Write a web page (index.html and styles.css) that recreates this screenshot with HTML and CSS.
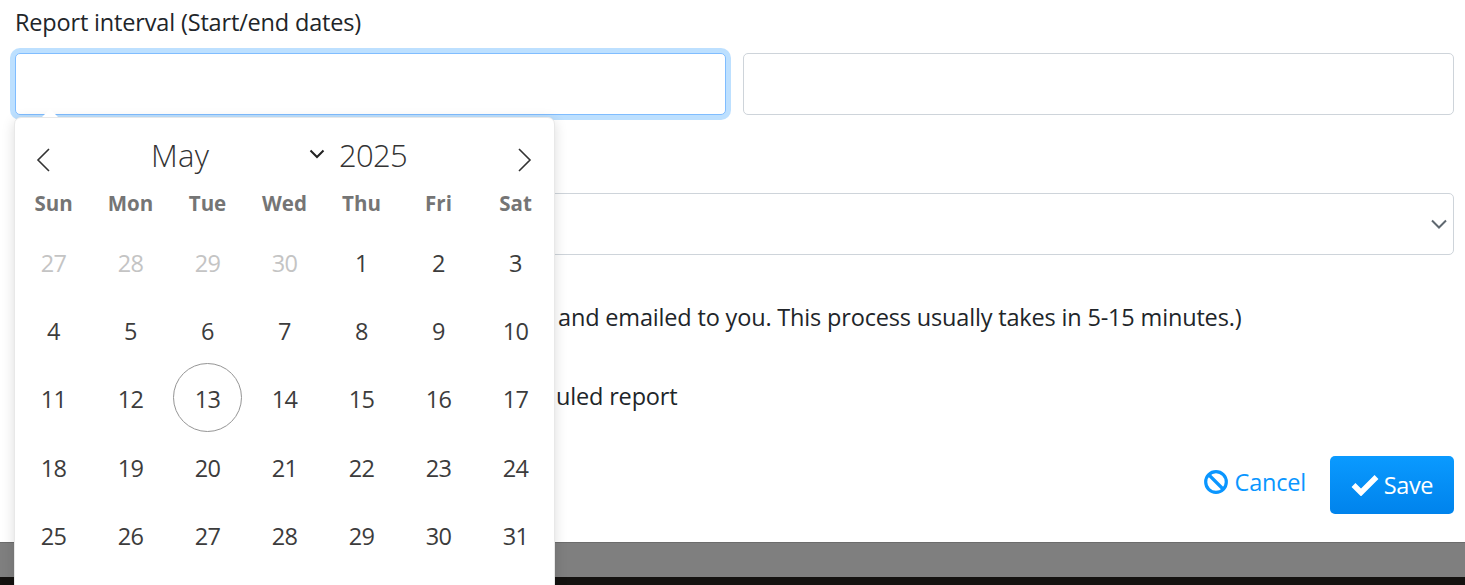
FILE: index.html
```html
<!DOCTYPE html>
<html lang="en">
<head>
<meta charset="utf-8">
<title>Report</title>
<link rel="stylesheet" href="styles.css">
</head>
<body>
<main class="form">
  <div class="label">Report interval (Start/end dates)</div>
  <div class="dates">
    <input class="field focused" type="text" aria-label="Start date">
    <input class="field" type="text" aria-label="End date">
  </div>
  <div class="select">
    <svg class="select-caret" width="16" height="12" viewBox="0 0 16 12"><path d="M1 2.5l7 7 7-7" fill="none" stroke="#5f6870" stroke-width="2"/></svg>
  </div>
  <p class="note">and emailed to you. This process usually takes in 5-15 minutes.)</p>
  <p class="check">uled report</p>
  <div class="actions">
    <a class="cancel">
      <svg width="24" height="24" viewBox="0 0 24 24"><circle cx="12" cy="12" r="10.300" fill="none" stroke="#0a96ff" stroke-width="3.200"/><path d="M5 5l14 14" stroke="#0a96ff" stroke-width="3.200"/></svg>
      <span class="cancel-text">Cancel</span>
    </a>
    <button class="save">
      <svg width="28" height="22" viewBox="0 0 28 22"><path d="M2.500 11l7.500 7.500L25.500 3" fill="none" stroke="#fff" stroke-width="5.500"/></svg>
      Save
    </button>
  </div>
</main>
<div class="overlay"></div>
<div class="black"></div>
<section class="calendar">
  <div class="cal-head">
    <svg class="nav" width="18" height="26" viewBox="0 0 18 26"><path d="M14 2L3 13l11 11" fill="none" stroke="#333" stroke-width="1.600"/></svg>
    <span class="month">May</span>
    <svg class="month-caret" width="16" height="10" viewBox="0 0 16 10"><path d="M1.500 1.500L8 8l6.500-6.500" fill="none" stroke="#222" stroke-width="2"/></svg>
    <span class="year">2025</span>
    <svg class="nav" width="18" height="26" viewBox="0 0 18 26"><path d="M4 2l11 11L4 24" fill="none" stroke="#333" stroke-width="1.600"/></svg>
  </div>
  <div class="weekdays"><span>Sun</span><span>Mon</span><span>Tue</span><span>Wed</span><span>Thu</span><span>Fri</span><span>Sat</span></div>
  <div class="days">
    <span class="prev">27</span><span class="prev">28</span><span class="prev">29</span><span class="prev">30</span><span>1</span><span>2</span><span>3</span>
    <span>4</span><span>5</span><span>6</span><span>7</span><span>8</span><span>9</span><span>10</span>
    <span>11</span><span>12</span><span class="today">13</span><span>14</span><span>15</span><span>16</span><span>17</span>
    <span>18</span><span>19</span><span>20</span><span>21</span><span>22</span><span>23</span><span>24</span>
    <span>25</span><span>26</span><span>27</span><span>28</span><span>29</span><span>30</span><span>31</span>
  </div>
</section>
</body>
</html>
```
FILE: styles.css
```css
html, body { margin: 0; height: 585px; overflow: hidden; background: #fff; }
body { font-family: "Open Sans", "Noto Sans", sans-serif; color: #212529; }
.form { height: 542px; box-sizing: border-box; padding: 0 11px 0 15px; display: flex; flex-direction: column; font-size: 23.500px; letter-spacing: -0.17px; }
.label { height: 53px; line-height: 44px; }
.dates { display: flex; gap: 17px; }
.field { flex: 1; min-width: 0; height: 62px; box-sizing: border-box; border: 1px solid #ced4da; border-radius: 5px; background: #fff; padding: 0; outline: none; }
.field.focused { border-color: #80bdff; box-shadow: 0 0 0 5px #bde0ff; }
.select { margin-top: 78px; height: 62px; box-sizing: border-box; border: 1px solid #ced4da; border-radius: 5px; display: flex; align-items: center; justify-content: flex-end; padding-right: 6px; }
.note { margin: 0; padding: 46px 0 0 543px; line-height: 32px; }
.check { margin: 0; padding: 47px 0 0 541px; line-height: 32px; }
.actions { margin-top: 44px; display: flex; justify-content: flex-end; align-items: center; }
.cancel { display: flex; align-items: center; gap: 7px; color: #0a96ff; margin-right: 24px; margin-top: -7px; letter-spacing: -0.2px; }
.save { width: 124px; height: 58px; border: 0; border-radius: 5px; background: linear-gradient(#0a9aff, #0083ec); color: #fff; font: inherit; letter-spacing: -0.4px; display: flex; align-items: center; justify-content: center; gap: 5px; padding: 0; }
.overlay { height: 35px; background: #7f7f7f; border-top: 1px solid #6c6c6c; box-sizing: border-box; }
.black { height: 8px; background: #141210; }
.calendar { position: absolute; left: 14px; top: 117px; width: 539px; height: 490px; background: #fff; border: 1px solid #e8e8e8; border-radius: 7px; box-shadow: 0 3px 13px rgba(0,0,0,.14); }
.calendar::before { content: ""; position: absolute; left: 27px; top: -9px; width: 0; height: 0; border: 8px solid transparent; border-top: 0; border-bottom-color: #fff; }
.cal-head { height: 63px; display: flex; align-items: center; font-weight: 300; font-size: 31px; color: #333; padding: 10px 21px 0 20px; box-sizing: border-box; }
.nav { margin-top: 10px; }
.month { margin-left: 98px; width: 158px; letter-spacing: 0.3px; }
.month-caret { margin-right: 14px; margin-top: -1px; }
.year { flex: 1; letter-spacing: -0.7px; }
.weekdays { display: grid; grid-template-columns: repeat(7, 77px); height: 44px; text-align: center; font-size: 20.500px; font-weight: 700; color: #757575; letter-spacing: 0; line-height: 44px; }
.days { display: grid; grid-template-columns: repeat(7, 77px); grid-auto-rows: 68.200px; margin-top: 4px; justify-items: center; align-items: center; font-size: 23.500px; color: #3c3c3c; letter-spacing: -0.6px; }
.days span { display: flex; width: 69px; height: 69px; align-items: center; justify-content: center; box-sizing: border-box; }
.days .prev { color: #c4c4c4; }
.days .today { border: 1px solid #959595; border-radius: 50%; margin-bottom: 4px; padding-top: 4px; }
```
